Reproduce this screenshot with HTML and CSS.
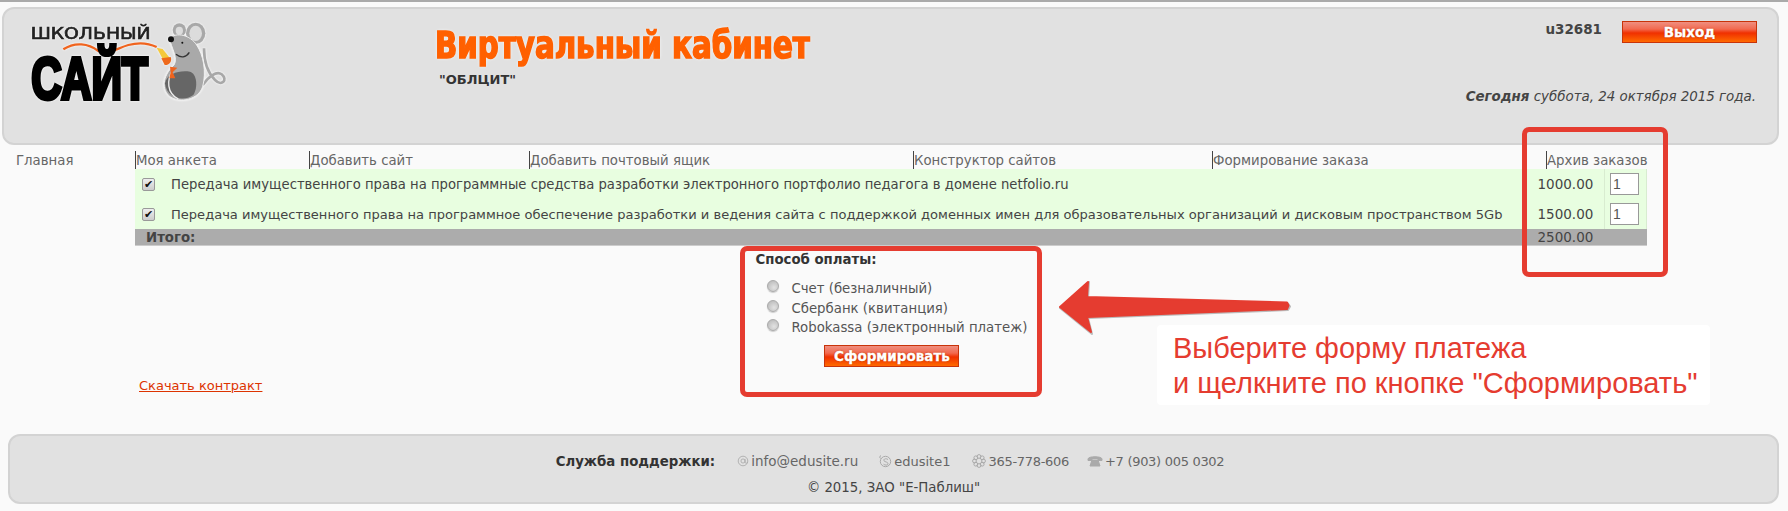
FILE: index.html
```html
<!DOCTYPE html>
<html>
<head>
    <meta charset="utf-8">
    <title>Виртуальный кабинет</title>
    <link rel="stylesheet" href="styles.css">
</head>
<body>
    <div class="header">
        <svg class="logo" viewBox="0 0 660 330" width="220" height="110">
            <text class="logo-top" x="32" y="72" textLength="360" lengthAdjust="spacingAndGlyphs">ШКОЛЬНЫЙ</text>
            <path class="logo-swoosh" d="M130 103 C165 80 205 85 235 108 C262 122 290 100 325 90 C355 82 385 84 410 96"/>
            <text class="logo-main" x="34" y="252" textLength="350" lengthAdjust="spacingAndGlyphs">САЙТ</text>
            <path class="mouse-tail" d="M552 100 C552 140 560 170 585 195 C605 215 625 195 605 178 C590 166 565 185 548 210"/>
            <ellipse class="mouse-ear" cx="527" cy="55" rx="29" ry="32"/>
            <ellipse class="mouse-ear-in" cx="527" cy="55" rx="19" ry="23"/>
            <ellipse class="mouse-ear" cx="478" cy="45" rx="20" ry="20"/>
            <ellipse class="mouse-ear-in" cx="478" cy="47" rx="11" ry="12"/>
            <path class="mouse-body" d="M448 70 C470 50 510 60 530 90 C550 120 560 170 548 215 C535 255 480 265 450 245 C425 225 425 185 462 150 C475 130 455 100 448 70Z"/>
            <path class="mouse-belly" d="M435 205 C440 175 480 165 510 170 C530 175 535 215 520 240 C490 262 440 250 435 205Z"/>
            <path class="mouse-line" d="M458 165 C440 195 440 235 475 252"/>
            <path class="mouse-smile" d="M468 118 C482 130 498 128 508 112"/>
            <circle class="mouse-nose" cx="453" cy="73" r="9"/>
            <circle class="mouse-nose" cx="487" cy="83" r="3"/>
            <path class="pencil-yellow" d="M410 98 L428 102 L452 132 L436 146Z"/>
            <path class="pencil-tip" d="M424 130 L452 126 C458 140 445 152 434 150Z"/>
            <path class="mouse-tie" d="M450 155 L472 158 L458 172 L466 190 L448 190 L452 172Z"/>
        </svg>
        <div class="title-block">
            <div class="title">Виртуальный кабинет</div>
            <div class="org">"ОБЛЦИТ"</div>
        </div>
        <div class="user-block">
            <div class="user-row">
                <span class="user-name">u32681</span>
                <a class="btn btn-exit">Выход</a>
            </div>
            <div class="today"><b>Сегодня</b> суббота, 24 октября 2015 года.</div>
        </div>
    </div>

    <div class="nav">
        <a class="nav-first">Главная</a>
        <a>Моя анкета</a>
        <a>Добавить сайт</a>
        <a>Добавить почтовый ящик</a>
        <a>Конструктор сайтов</a>
        <a>Формирование заказа</a>
        <a>Архив заказов</a>
    </div>

    <table class="orders">
        <colgroup>
            <col class="col-check">
            <col>
            <col class="col-price">
            <col class="col-qty">
        </colgroup>
        <tr>
            <td class="cell-check"><input type="checkbox" class="check" checked></td>
            <td class="cell-short">Передача имущественного права на программные средства разработки электронного портфолио педагога в домене netfolio.ru</td>
            <td class="cell-price">1000.00</td>
            <td class="cell-qty"><input type="text" class="qty" value="1"></td>
        </tr>
        <tr>
            <td class="cell-check"><input type="checkbox" class="check" checked></td>
            <td>Передача имущественного права на программное обеспечение разработки и ведения сайта с поддержкой доменных имен для образовательных организаций и дисковым пространством 5Gb</td>
            <td class="cell-price">1500.00</td>
            <td class="cell-qty"><input type="text" class="qty" value="1"></td>
        </tr>
        <tr class="total">
            <td colspan="2" class="total-label">Итого:</td>
            <td class="cell-price">2500.00</td>
            <td></td>
        </tr>
    </table>

    <div class="main">
        <a class="contract">Скачать контракт</a>
        <form class="pay">
            <div class="pay-title">Способ оплаты:</div>
            <label class="pay-row"><input type="radio" name="pay" class="radio">Счет (безналичный)</label>
            <label class="pay-row"><input type="radio" name="pay" class="radio">Сбербанк (квитанция)</label>
            <label class="pay-row"><input type="radio" name="pay" class="radio">Robokassa (электронный платеж)</label>
            <a class="btn btn-make">Сформировать</a>
        </form>
    </div>

    <div class="footer">
        <div class="contacts">
            <b class="support">Служба поддержки:</b>
            <span class="contact contact-mail">
                <svg class="icon icon-mail" viewBox="0 0 14 14"><circle cx="7" cy="7" r="5.6"/><circle cx="7" cy="7" r="2.4"/><path d="M9.4 4.6V8.5c0 1.4 2.4 1.4 3 0"/></svg>info@edusite.ru
            </span>
            <span class="contact contact-skype">
                <svg class="icon" viewBox="0 0 14 14"><circle cx="7.5" cy="7.5" r="5.2"/><path d="M3 1.5 C1.5 2 1.5 4 2.5 4.5M10 5.5C8 4 5 5 6 6.8c1 1.4 4 1 4 3 0 1.6-3 1.700-4.500.4"/></svg>edusite1
            </span>
            <span class="contact contact-num">
                <svg class="icon" viewBox="0 0 14 14"><circle cx="7" cy="2.5" r="1.9"/><circle cx="7" cy="11.5" r="1.9"/><circle cx="2.5" cy="7" r="1.9"/><circle cx="11.5" cy="7" r="1.9"/><circle cx="3.8" cy="3.8" r="1.9"/><circle cx="10.2" cy="3.8" r="1.9"/><circle cx="3.8" cy="10.2" r="1.9"/><circle cx="10.2" cy="10.2" r="1.9"/></svg>365-778-606
            </span>
            <span class="contact contact-num contact-phone">
                <svg class="icon icon-phone" viewBox="0 0 16 14"><path d="M1 5C1 2 15 2 15 5V6.500H11V4.500H5V6.500H1Z"/><path d="M5 6H11L13 12H3Z"/></svg>+7 (903) 005 0302
            </span>
        </div>
        <div class="copyright">© 2015, ЗАО "Е-Паблиш"</div>
    </div>

    <!-- пометки поверх страницы -->
    <div class="frame frame-archive"></div>
    <div class="frame frame-pay"></div>
    <svg class="arrow" viewBox="0 0 240 60" width="240" height="60">
        <path class="arrow-shadow" d="M1 29 L30 3 L29 19 L229 24.500 L231 27.500 L229 31 L29 39 L33 55Z"/>
        <path class="arrow-fill" d="M1 28 L29 3 L28 18 L228 23.500 L229.500 26.500 L228 30 L28 38 L32 53Z"/>
    </svg>
    <div class="note">Выберите форму платежа<br>и щелкните по кнопке "Сформировать"</div>
</body>
</html>
```

FILE: styles.css
```css
body {
    margin: 0;
    background-color: #fafafa;
    border-top: 2px solid #aaa;
    font-family: "DejaVu Sans", Verdana, sans-serif;
    font-size: 13px;
    color: #444;
    height: 509px;
    overflow: hidden;
    position: relative;
}

/* шапка */
.header {
    display: flex;
    box-sizing: border-box;
    height: 138px;
    margin: 5px 9px 0 2px;
    background-color: #e1e1e1;
    border: 2px solid #d3d3d3;
    border-radius: 12px;
}
.logo {
    margin: 6px 0 0 16px;
    flex: none;
    filter: drop-shadow(0 0 1px #fff);
}
.logo-top {
    font-family: "DejaVu Sans", sans-serif;
    font-size: 48px;
    fill: #222;
    stroke: #222;
    stroke-width: 2px;
}
.logo-main {
    font-family: "Liberation Sans", sans-serif;
    font-weight: bold;
    font-size: 175px;
    fill: #000;
    stroke: #000;
    stroke-width: 12px;
}
.logo-swoosh {
    fill: none;
    stroke: #f0641e;
    stroke-width: 7px;
}
.mouse-tail {
    fill: none;
    stroke: #a8a8a8;
    stroke-width: 8px;
}
.mouse-ear {
    fill: #a8a8a8;
}
.mouse-ear-in {
    fill: #dcdcdc;
}
.mouse-body {
    fill: #a9a9a9;
    stroke: #eee;
    stroke-width: 3px;
}
.mouse-belly {
    fill: #666;
}
.mouse-line {
    fill: none;
    stroke: #eee;
    stroke-width: 4px;
}
.mouse-smile {
    fill: none;
    stroke: #333;
    stroke-width: 4px;
}
.mouse-nose {
    fill: #111;
}
.pencil-yellow {
    fill: #f4c93c;
}
.pencil-tip {
    fill: #ee6a1c;
}
.mouse-tie {
    fill: #f0641e;
}
.title-block {
    margin: 13px 0 0 195px;
}
.title {
    font-family: "DejaVu Sans", sans-serif;
    font-stretch: condensed;
    font-weight: bold;
    font-size: 37px;
    line-height: 47px;
    white-space: nowrap;
    color: #ff6000;
    -webkit-text-stroke: 1.500px #ff6000;
    text-shadow: 0 0 4px #fff;
    transform: scaleX(.88);
    transform-origin: left;
}
.org {
    margin: 3px 0 0 4px;
    font-weight: bold;
    color: #333;
}
.user-block {
    margin-left: auto;
    margin-right: 20px;
    text-align: right;
}
.user-row {
    display: flex;
    justify-content: flex-end;
    align-items: flex-start;
    margin-top: 12px;
}
.user-name {
    margin-right: 20px;
    font-size: 13.500px;
    font-weight: bold;
}
.today {
    margin-top: 46px;
    margin-right: 1px;
    font-size: 13.400px;
    font-style: italic;
}

/* кнопки */
.btn {
    display: block;
    box-sizing: border-box;
    width: 135px;
    height: 22px;
    line-height: 20px;
    text-align: center;
    font-size: 13.500px;
    font-weight: bold;
    color: #fff;
    border: 1px solid #c8330a;
    background: linear-gradient(#ef8f80, #f26a50 35%, #f03000 55%, #ff6a00);
    text-shadow: 0 0 2px #a30;
    -webkit-text-stroke: .3px #fff;
}

/* меню */
.nav {
    display: grid;
    grid-template-columns: 135px 174px 220px 384px 299px 334px 1fr;
    height: 18px;
    margin-top: 6px;
    margin-right: 8px;
    font-size: 13.300px;
    color: #666;
}
.nav a {
    border-left: 1px solid #444;
    height: 18px;
    line-height: 19px;
    white-space: nowrap;
}
.nav .nav-first {
    border-left: 0;
    padding-left: 16px;
}

/* таблица заказа */
.orders {
    table-layout: fixed;
    width: 1512px;
    margin-left: 135px;
    border-collapse: collapse;
    background-color: #e8fee0;
    color: #444;
    font-size: 13.050px;
}
.col-check {
    width: 36px;
}
.col-price {
    width: 82px;
}
.col-qty {
    width: 42px;
}
.orders td {
    height: 30px;
    padding: 0;
    white-space: nowrap;
}
.orders .cell-check {
    padding-left: 7px;
}
.orders .cell-short {
    font-size: 13.200px;
}
.orders .cell-price {
    padding-left: 15px;
    font-size: 13.500px;
}
.orders .cell-qty {
    padding-left: 5px;
    border-left: 1px solid #d8ecd0;
    border-right: 1px solid #d8ecd0;
}
.check {
    appearance: none;
    display: block;
    position: relative;
    box-sizing: border-box;
    width: 13px;
    height: 13px;
    margin: 0;
    border: 1px solid #999;
    border-radius: 2px;
    background: linear-gradient(#eee, #ccc);
}
.check::after {
    content: "✔";
    position: absolute;
    left: 1px;
    top: -2px;
    font-size: 11px;
    line-height: 14px;
    color: #111;
}
.qty {
    display: block;
    box-sizing: border-box;
    width: 29px;
    height: 22px;
    padding: 0 2px;
    border: 1px solid #999;
    background: #fff;
    font-family: "Liberation Sans", sans-serif;
    font-size: 14px;
    color: #555;
}
.total {
    background-color: #acacac;
    border-bottom: 1px solid #ccc;
}
.orders .total td {
    height: 16px;
    line-height: 15px;
}
.orders .total-label {
    padding-left: 11px;
    font-size: 13.300px;
    font-weight: bold;
}

/* способ оплаты */
.main {
    display: flex;
    height: 188px;
}
.contract {
    align-self: flex-start;
    margin: 132px 0 0 139px;
    color: #dd3300;
    text-decoration: underline;
    white-space: nowrap;
}
.pay {
    margin: 6px 0 0 493px;
}
.pay-title {
    margin-bottom: 14px;
    font-size: 13.300px;
    font-weight: bold;
    color: #333;
}
.pay-row {
    display: flex;
    align-items: flex-start;
    height: 19.500px;
    padding-left: 12px;
    font-size: 13.300px;
    white-space: nowrap;
    color: #555;
}
.radio {
    appearance: none;
    flex: none;
    width: 12px;
    height: 12px;
    margin: -1px 12px 0 0;
    border: 1px solid #aaa;
    border-radius: 50%;
    background: radial-gradient(circle at 60% 65%, #e2e2e2, #b4b4b4);
    box-shadow: 0 1px 1px #ccc;
    box-sizing: border-box;
}
.btn-make {
    margin: 5px 0 0 69px;
}

/* подвал */
.footer {
    box-sizing: border-box;
    height: 70px;
    margin: 0 9px 0 8px;
    padding-top: 17px;
    background-color: #e1e1e1;
    border: 2px solid #d3d3d3;
    border-radius: 12px;
    text-align: center;
}
.contacts {
    display: flex;
    justify-content: center;
    align-items: center;
    gap: 22px;
    padding-right: 7px;
    color: #666;
    white-space: nowrap;
}
.support {
    font-size: 13.300px;
    color: #333;
}
.contact {
    display: flex;
    align-items: center;
    gap: 2px;
}
.contact-mail {
    font-size: 13.500px;
}
.contact-skype {
    margin-left: -2px;
}
.contact-num {
    letter-spacing: -.3px;
}
.contact-phone {
    margin-left: -4px;
}
.icon {
    width: 14px;
    height: 14px;
    fill: none;
    stroke: #aaa;
    stroke-width: 1px;
}
.icon-mail {
    width: 12px;
    height: 12px;
}
.icon-phone {
    width: 16px;
    fill: #aaa;
}
.copyright {
    margin-top: 11px;
    font-size: 13.300px;
    color: #444;
}

/* красные пометки */
.frame {
    position: absolute;
    box-sizing: border-box;
    border: 5px solid #e53c30;
    border-radius: 7px;
}
.frame-archive {
    left: 1522px;
    top: 125px;
    width: 146px;
    height: 150px;
}
.frame-pay {
    left: 740px;
    top: 244px;
    width: 302px;
    height: 151px;
}
.arrow {
    position: absolute;
    left: 1059px;
    top: 277px;
}
.arrow-shadow {
    fill: #bbb;
    stroke: #bbb;
    stroke-width: 2px;
    stroke-linejoin: round;
}
.arrow-fill {
    fill: #e53c30;
    stroke: #e53c30;
    stroke-width: 2px;
    stroke-linejoin: round;
}
.note {
    position: absolute;
    left: 1157px;
    top: 323px;
    box-sizing: border-box;
    width: 553px;
    height: 80px;
    padding: 6px 0 0 16px;
    background-color: #fff;
    border-radius: 4px;
    font-family: "Liberation Sans", sans-serif;
    font-size: 29px;
    line-height: 35px;
    color: #e53c30;
    white-space: nowrap;
}
```
